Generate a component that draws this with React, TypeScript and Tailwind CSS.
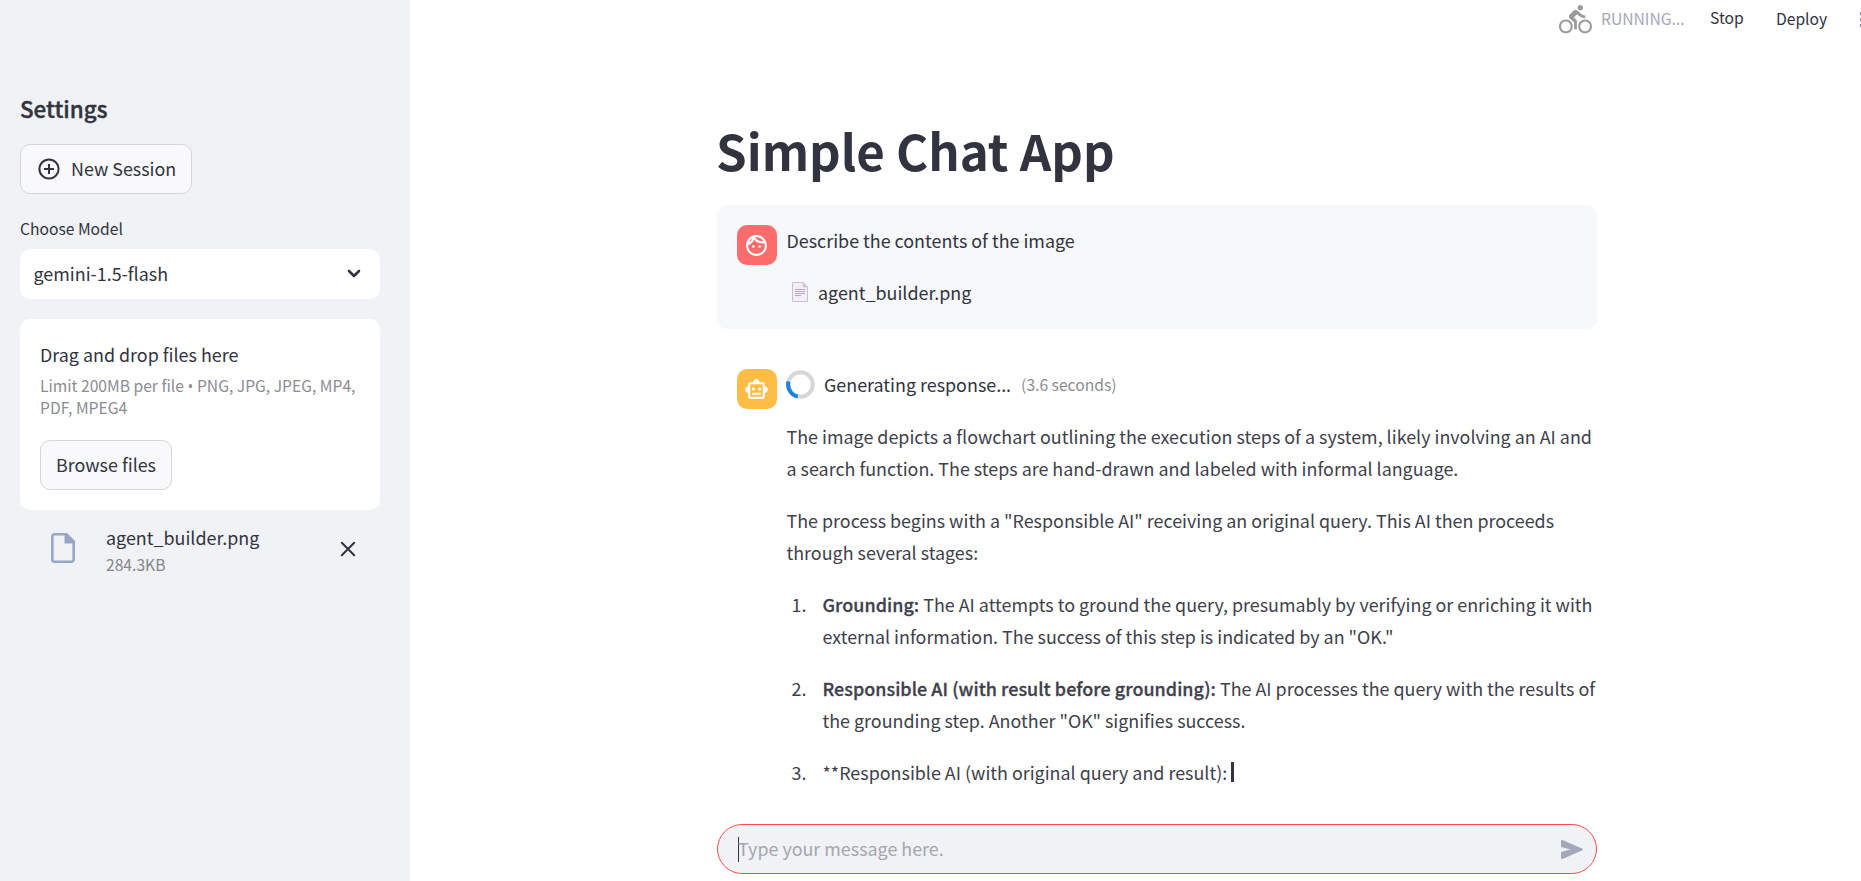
import React from 'react';
import { MdDirectionsBike, MdOutlineFace, MdOutlineSmartToy } from 'react-icons/md';

const steps = [
  {
    label: 'Grounding:',
    first: ' The AI attempts to ground the query, presumably by verifying or enriching it with',
    second: 'external information. The success of this step is indicated by an "OK."',
  },
  {
    label: 'Responsible AI (with result before grounding):',
    first: ' The AI processes the query with the results of',
    second: 'the grounding step. Another "OK" signifies success.',
  },
];

function Sidebar() {
  return (
    <aside className="flex w-[410px] shrink-0 flex-col bg-[#f0f2f6] px-5 pt-[93px]">
      <div className="w-[360px]">
        <h3 className="text-[22.4px] leading-[30px] font-medium [font-variant-ligatures:none] [-webkit-text-stroke:0.4px]">Settings</h3>
        <button className="mt-[21px] flex h-[50px] w-[172px] items-center rounded-[10px] border border-[#d5d6db] bg-[#f9f9fb] pl-[16.5px]">
          <svg viewBox="0 0 22 22" className="size-[22px]" fill="none" stroke="currentColor" strokeWidth="2">
            <circle cx="11" cy="11" r="9.6" />
            <path d="M11 6v10M6 11h10" />
          </svg>
          <span className="ml-[11.5px] pb-[2px]">New Session</span>
        </button>
        <div className="mt-[22px] text-[15.65px] leading-[26px]">Choose Model</div>
        <div className="mt-[7px] flex h-[50px] items-center justify-between rounded-[10px] bg-white pr-[19px] pl-[13.5px]">
          <span className="pb-[2px]">gemini-1.5-flash</span>
          <svg viewBox="0 0 14 10" className="h-[10px] w-[14px]" fill="none" stroke="currentColor" strokeWidth="2.6" strokeLinecap="round" strokeLinejoin="round">
            <path d="M2 2l5 5 5-5" />
          </svg>
        </div>
        <section className="mt-5 h-[191px] rounded-[10px] bg-white px-5 pt-5">
          <div className="leading-[31px]">Drag and drop files here</div>
          <div className="mt-[5px] text-[15.65px] leading-[22px] whitespace-nowrap text-[#8b8c93]">
            Limit 200MB per file<span className="mx-[3.5px] inline-block w-[6px] text-center font-['Open_Sans',sans-serif] leading-none">•</span>PNG, JPG, JPEG, MP4,
            <br />
            PDF, MPEG4
          </div>
          <button className="mt-[21px] flex h-[50px] w-[132px] items-center justify-center rounded-[10px] border border-[#d5d6db] bg-[#f9f9fb] pb-[2px]">
            Browse files
          </button>
        </section>
        <div className="flex items-center pt-[13px] pr-[24px] pl-[31px]">
          <svg viewBox="0 0 24 30" className="-mt-[4px] h-[30px] w-[24px]">
            <path d="M3.5 1.300H15l7.700 8v17.200a2.200 2.200 0 0 1-2.200 2.200h-17A2.200 2.200 0 0 1 1.300 26.500v-23A2.200 2.200 0 0 1 3.500 1.300z" fill="none" stroke="#98a6c6" strokeWidth="2.600" />
            <path d="M13.500 0H16l8 8v2.500H13.500z" fill="#98a6c6" />
          </svg>
          <div className="ml-[31px] flex-1">
            <div className="leading-[28px]">agent_builder.png</div>
            <div className="pt-[2px] text-[15.65px] leading-[24px] text-[#85868e]">284.3KB</div>
          </div>
          <svg viewBox="0 0 16 16" className="-mt-[2px] size-4" fill="none" stroke="currentColor" strokeWidth="2" strokeLinecap="round">
            <path d="M1.800 1.800l12.400 12.400M14.200 1.800L1.800 14.200" />
          </svg>
        </div>
      </div>
    </aside>
  );
}

function TopBar() {
  return (
    <header className="flex h-[38px] items-center self-end text-[15.65px] leading-[20px]">
      <MdDirectionsBike className="size-[33px] text-[#9b9b9b]" />
      <span className="ml-[9.5px] w-[82px] text-[#a3a8b8]">RUNNING...</span>
      <span className="ml-[27px] w-[33px] pb-[2px]">Stop</span>
      <span className="ml-[33px] w-[51px]">Deploy</span>
      <span className="ml-[33px] flex w-px flex-col gap-[3px]">
        <i className="h-[3px] bg-[#8d8e95]" />
        <i className="h-[3px] bg-[#8d8e95]" />
        <i className="h-[3px] bg-[#8d8e95]" />
      </span>
    </header>
  );
}

function DocumentIcon() {
  return (
    <svg viewBox="0 0 16 20" className="h-5 w-4">
      <path d="M1 .5h10l4.500 4.500v14.500H1a.5.5 0 0 1-.5-.5V1A.5.5 0 0 1 1 .5z" fill="#f3eef8" stroke="#c9c0d3" />
      <path d="M11 .5V5h4.500z" fill="#cdc4d6" stroke="#c9c0d3" strokeWidth=".6" />
      <path d="M3 7.500h10M3 9.500h10M3 11.500h10M3 13.500h6" stroke="#b5a9c2" />
    </svg>
  );
}

function Conversation() {
  return (
    <>
      <article className="flex h-[124px] rounded-[10px] bg-[#f7f8fa] pl-5">
        <div className="mt-5 flex size-10 items-center justify-center rounded-[10px] bg-[#ff6c6c] pr-px text-white">
          <MdOutlineFace className="size-[25px]" />
        </div>
        <div className="ml-[9.5px] flex flex-col gap-5 pt-[19px]">
          <p>Describe the contents of the image</p>
          <p className="flex items-center pl-[5px]">
            <DocumentIcon />
            <span className="ml-[10.5px]">agent_builder.png</span>
          </p>
        </div>
      </article>
      <article className="mt-[39px] flex pl-5">
        <div className="mt-px flex size-10 shrink-0 items-center justify-center rounded-[10px] bg-[#ffbd45] pr-px text-white">
          <MdOutlineSmartToy className="size-[25px]" />
        </div>
        <div className="ml-[9.5px] flex flex-col gap-5 whitespace-nowrap text-[#3e404b]">
          <div className="flex items-center text-[#31333f]">
            <svg viewBox="0 0 29 29" className="-ml-[0.5px] size-[29px]" fill="none" strokeWidth="4">
              <circle cx="14.500" cy="14.500" r="12.300" stroke="#d6d7d9" />
              <path d="M2.500 11.500A12.300 12.300 0 0 0 11.800 26.500" stroke="#1c83e1" />
            </svg>
            <span className="ml-[9px]">Generating response...</span>
            <span className="ml-[10px] pt-[2px] text-[15.65px] leading-[30px] text-[#8b8c93]">(3.6 seconds)</span>
          </div>
          <p>
            The image depicts a flowchart outlining the execution steps of a system, likely involving an AI and
            <br />a search function. The steps are hand-drawn and labeled with informal language.
          </p>
          <p>
            The process begins with a "Responsible AI" receiving an original query. This AI then proceeds
            <br />
            through several stages:
          </p>
          <ol className="flex flex-col gap-5">
            {steps.map((step, i) => (
              <li key={step.label} className="flex">
                <span className="w-[36px] shrink-0 pr-[16px] text-right">{i + 1}.</span>
                <span>
                  <strong className="font-medium tracking-[0.055px] [-webkit-text-stroke:0.3px]">{step.label}</strong>
                  {step.first}
                  <br />
                  {step.second}
                </span>
              </li>
            ))}
            <li className="flex items-center">
              <span className="w-[36px] shrink-0 pr-[16px] text-right">3.</span>
              <span>**Responsible AI (with original query and result):</span>
              <span className="ml-[4px] h-5 w-[3px] bg-[#31333f]" />
            </li>
          </ol>
        </div>
      </article>
    </>
  );
}

function ChatInput() {
  return (
    <div className="mt-[36px] flex h-[50px] items-center rounded-full border border-[#ff4b4b] bg-[#f0f2f6] pr-[13px] pl-5">
      <span className="h-[25px] w-px bg-[#31333f]" />
      <span className="-ml-px flex-1 pb-[2px] text-[#a5a6ac]">Type your message here.</span>
      <svg viewBox="0 0 22 19" className="h-[19px] w-[22px] fill-[#a3a8b8]">
        <path d="M0 1.200C0 .3.700-.2 1.500.1l20 8.700c.700.3.700 1.100 0 1.400l-20 8.700C.700 19.200 0 18.700 0 17.800V11.900l9.500-2.400L0 7.100z" />
      </svg>
    </div>
  );
}

export default function App() {
  return (
    <div className="flex h-[881px] w-[1861px] overflow-hidden bg-white font-['Noto_Sans_CJK_SC',sans-serif] text-[17.9px] leading-[32px] text-[#31333f]">
      <Sidebar />
      <main className="flex flex-1 flex-col">
        <TopBar />
        <div className="ml-[307px] w-[880px] pt-[79px]">
          <h1 className="-ml-px mb-[22px] text-[49.2px] leading-[66px] font-bold">Simple Chat App</h1>
          <Conversation />
          <ChatInput />
        </div>
      </main>
    </div>
  );
}
